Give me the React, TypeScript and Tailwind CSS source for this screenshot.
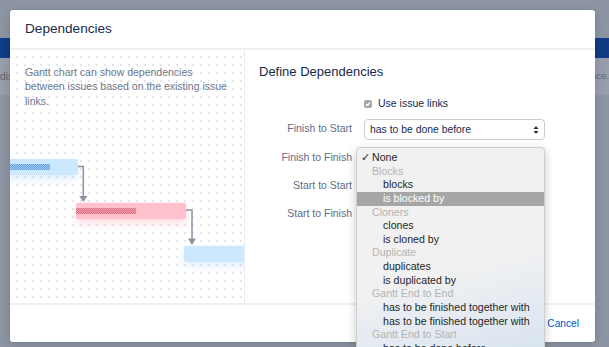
import React from 'react';

type MenuRow = { label: string; kind: 'check' | 'group' | 'item'; active?: boolean };

const menuRows: MenuRow[] = [
  { label: 'None', kind: 'check' },
  { label: 'Blocks', kind: 'group' },
  { label: 'blocks', kind: 'item' },
  { label: 'is blocked by', kind: 'item', active: true },
  { label: 'Cloners', kind: 'group' },
  { label: 'clones', kind: 'item' },
  { label: 'is cloned by', kind: 'item' },
  { label: 'Duplicate', kind: 'group' },
  { label: 'duplicates', kind: 'item' },
  { label: 'is duplicated by', kind: 'item' },
  { label: 'Gantt End to End', kind: 'group' },
  { label: 'has to be finished together with', kind: 'item' },
  { label: 'has to be finished together with', kind: 'item' },
  { label: 'Gantt End to Start', kind: 'group' },
  { label: 'has to be done before', kind: 'item' },
];

const rows = ['Finish to Start', 'Finish to Finish', 'Start to Start', 'Start to Finish'];

function SelectBox({ value }: { value?: string }) {
  return (
    <div className="h-[21px] w-[181px] border border-[#c9ccd3] rounded-[4px] bg-white flex items-center justify-between pl-[5px] pr-[5px] text-[10.4px] text-[#172b4d]">
      <span>{value}</span>
      <svg width="6" height="10" viewBox="0 0 6 10">
        <path d="M3 1 L5.5 4 H0.5 Z" fill="#333" />
        <path d="M3 9 L5.5 6 H0.5 Z" fill="#333" />
      </svg>
    </div>
  );
}

function Menu() {
  return (
    <div className="absolute left-[111px] top-[96.5px] w-[189px] pt-[3.4px] pb-[4px] rounded-[4px] border border-[#cfcfcf] bg-[linear-gradient(165deg,#f1f1f1_55%,#e7ecf2_72%,#d6e2ef_100%)] shadow-[0_3px_10px_rgba(0,0,0,0.22)] text-[10.6px] leading-[13.67px] z-10">
      {menuRows.map((r, i) => (
        <div
          key={i}
          className={`h-[13.67px] relative whitespace-nowrap ${
            r.active ? 'bg-[#a6a6a6] text-white' : r.kind === 'group' ? 'text-[#b4b4b4]' : 'text-[#262626]'
          } ${r.kind === 'item' ? 'pl-[26px]' : 'pl-[15px]'}`}
        >
          {r.kind === 'check' && <span className="absolute left-[4px] top-0 text-[#262626]">✓</span>}
          {r.label}
        </div>
      ))}
    </div>
  );
}

function Diagram() {
  return (
    <>
      <div className="absolute left-[-30px] top-[109px] w-[98px] h-[16px] rounded-[2px] bg-[#cce8ff] shadow-[0_4px_8px_rgba(160,205,250,0.35)]">
        <div className="absolute left-0 top-[5px] w-[70px] h-[6px] bg-[repeating-conic-gradient(#5f9fe0_0_25%,#a3cdf4_0_50%)] bg-[length:2px_2px]" />
      </div>
      <div className="absolute left-[66px] top-[153px] w-[110px] h-[16px] rounded-[2px] bg-[#ffc2cd] shadow-[0_4px_8px_rgba(255,170,185,0.45)]">
        <div className="absolute left-0 top-[4.5px] w-[60px] h-[6px] bg-[repeating-conic-gradient(#d9697f_0_25%,#f5a3b2_0_50%)] bg-[length:2px_2px]" />
      </div>
      <div className="absolute left-[174px] top-[196px] w-[80px] h-[16px] rounded-[2px] bg-[#cce8ff] shadow-[0_4px_8px_rgba(160,205,250,0.35)]" />
      <svg className="absolute left-0 top-0" width="235" height="255" viewBox="0 0 235 255">
        <path d="M68 116.5 H73.3 V147" fill="none" stroke="#8b93a1" strokeWidth="1.5" />
        <path d="M69.3 146 H77.3 L73.3 152 Z" fill="#8b93a1" />
        <path d="M175.8 160 H182 V189" fill="none" stroke="#8b93a1" strokeWidth="1.5" />
        <path d="M178 188.5 H186 L182 195 Z" fill="#8b93a1" />
      </svg>
    </>
  );
}

export default function App() {
  return (
    <div className="relative w-[609px] h-[347px] overflow-hidden bg-[#8d94a2] font-['Liberation_Sans',Arial,sans-serif]">
      {/* page behind the overlay */}
      <div className="h-[38px]" />
      <div className="h-[20px] bg-[#0f3c84]" />
      <div className="h-[37px] bg-[#979daa] flex items-center justify-between text-[10.5px] text-[#5b6371]">
        <span>dis</span>
        <span className="text-[9.5px]">nce.</span>
      </div>

      {/* modal */}
      <div className="absolute left-[10px] top-[10px] w-[585px] h-[332px] bg-white rounded-[3px] shadow-[0_2px_8px_rgba(0,0,0,0.15)] flex flex-col">
        <div className="h-[40px] shrink-0 border-b-2 border-[#eef0f2] flex items-center px-[15px] text-[13.6px] text-[#172b4d]">
          Dependencies
        </div>

        <div className="h-[255px] shrink-0 flex border-b-2 border-[#eef0f2]">
          <div className="relative w-[235px] shrink-0 overflow-hidden border-r border-[#ebecf0] bg-[radial-gradient(circle,#d6d9de_0.6px,transparent_0.9px)] bg-[length:8px_8px] bg-[position:3px_3px]">
            <p className="w-[206px] ml-[15px] mt-[14.5px] text-[10.5px] leading-[14.5px] text-[#6b778c]">
              Gantt chart can show dependencies between issues based on the existing issue links.
            </p>
            <Diagram />
          </div>

          <div className="relative flex-1 pl-[14px] pt-[13px]">
            <div className="text-[13px] leading-[18px] text-[#172b4d]">Define Dependencies</div>
            <div className="mt-[15px] grid grid-cols-[93px_181px] gap-x-[12px] gap-y-[7px] items-center">
              <div />
              <div className="h-[16px] flex items-center gap-[6px] text-[10.5px] text-[#172b4d]">
                <span className="w-[8px] h-[8px] rounded-[2px] bg-[#a6a6a6] flex items-center justify-center">
                  <svg width="6" height="6" viewBox="0 0 6 6">
                    <path d="M1 3 L2.5 4.5 L5 1.5" fill="none" stroke="#fff" strokeWidth="1.2" />
                  </svg>
                </span>
                Use issue links
              </div>
              {rows.map((r, i) => (
                <React.Fragment key={r}>
                  <div className={`text-right text-[10.5px] text-[#5e6c84] ${i === 0 ? '-mt-[1px]' : ''}`}>{r}</div>
                  <SelectBox value={i === 0 ? 'has to be done before' : undefined} />
                </React.Fragment>
              ))}
            </div>
            <Menu />
          </div>
        </div>

        <div className="flex-1 flex items-center justify-end pr-[16px] text-[10.2px] text-[#0052cc]">
          Cancel
        </div>
      </div>
    </div>
  );
}
